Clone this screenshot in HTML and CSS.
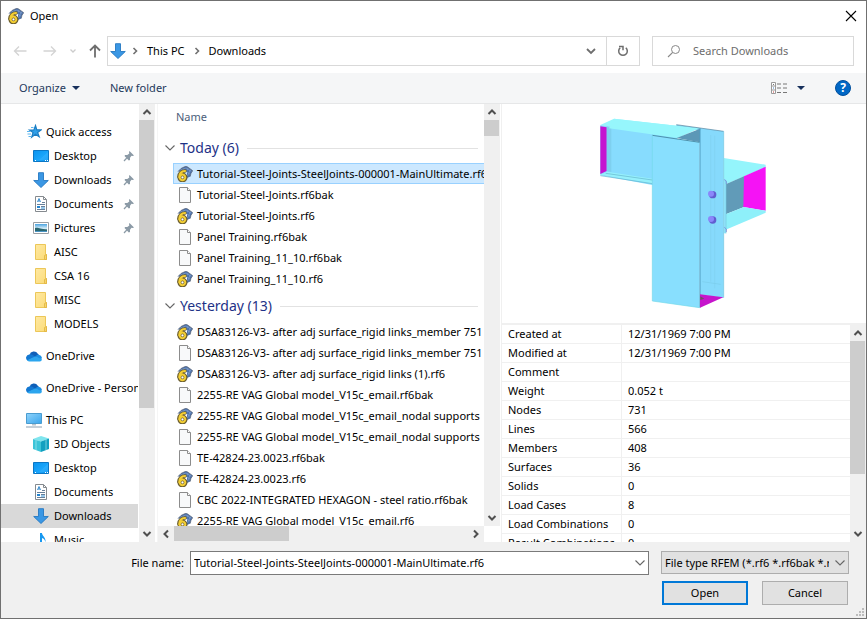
FILE: index.html
```html
<!DOCTYPE html>
<html lang="en">
<head>
<meta charset="utf-8">
<title>Open</title>
<link rel="stylesheet" href="styles.css">
</head>
<body>
<svg class="defs" aria-hidden="true">
  <defs>
    <linearGradient id="g-screen" x1="0" y1="0" x2="1" y2="1"><stop offset="0" stop-color="#0a93ef"/><stop offset=".6" stop-color="#1aa6fb"/><stop offset="1" stop-color="#0b90ea"/></linearGradient>
    <linearGradient id="g-folder" x1="0" y1="0" x2="1" y2="1"><stop offset="0" stop-color="#ffe9a2"/><stop offset="1" stop-color="#fbdb78"/></linearGradient>
    <linearGradient id="g-pc" x1="0" y1="0" x2="1" y2="1"><stop offset="0" stop-color="#8fd3fb"/><stop offset="1" stop-color="#3aa5ec"/></linearGradient>
    <linearGradient id="g-pic" x1="0" y1="0" x2="0" y2="1"><stop offset="0" stop-color="#4aa3e0"/><stop offset=".55" stop-color="#d8eef8"/><stop offset="1" stop-color="#2f6f8f"/></linearGradient>
  </defs>
  <symbol id="rfem" viewBox="0 0 16 16">
    <path d="M1 5.500L4 2.500 7.500.8 9.500.3 12 2l3.700 2.700-1.700 2.500-.8 3.300-3.200 1.500V6z" fill="#4a70ab"/>
    <path d="M3 4l6-2 5.500 3.500M6 3.200L10 6l3.500 2.500M8.500 6.500L11.500 1.500M10.500 10l3-6.500" stroke="#8fabd2" stroke-width=".6" fill="none"/>
    <path d="M1 5.500L4 2.500 7.500.8 9.500.3 12 2l3.700 2.700-1.700 2.500-.8 3.300" stroke="#566070" stroke-width=".7" fill="none"/>
    <path d="M8 5C4.500 5 1.800 7.500 1.800 11M5.500 8.200a3.200 3.200 0 1 1-.1 0" fill="none" stroke="#6e6030" stroke-width="3.600" stroke-linecap="round"/>
    <path d="M8 5C4.500 5 2.300 7.500 2.300 11.300M5.500 8.700a2.700 2.700 0 1 1-.1 0" fill="none" stroke="#f4cf33" stroke-width="2.200" stroke-linecap="round"/>
    <circle cx="5.500" cy="11.400" r="1.400" fill="#fff" stroke="#7b6a2c" stroke-width=".8"/>
  </symbol>
  <symbol id="file" viewBox="0 0 16 16">
    <path d="M2.500.5h8l3 3v12h-11z" fill="#f8f9fa" stroke="#8c8c8c"/>
    <path d="M10.500.5v3h3" fill="#fff" stroke="#8c8c8c"/>
  </symbol>
  <symbol id="star" viewBox="0 0 16 16">
    <path d="M9.500 1.500l1.300 4.300 4.400.1-3.600 2.600 1.600 4.300-3.800-2.600-3.700 2.900 1.300-4.500L3.500 6.100l4.400-.2z" fill="#2f9fe8" stroke="#1b7ec4" stroke-width="1.200"/>
    <path d="M1 7.500h3.500M1.500 10h3.500M2.500 12.500h3M5 3.500h2.500" stroke="#5ab5ee" stroke-width="1"/>
  </symbol>
  <symbol id="desktop" viewBox="0 0 16 16">
    <path d="M.5 2.500h15v11H.5z" fill="url(#g-screen)" stroke="#0b76c4"/>
    <path d="M6 12L15 4v8z" fill="#39b4ff" opacity=".5"/>
    <path d="M2 12.500h1M12 12.500h1M14 12.500h1" stroke="#fff"/>
  </symbol>
  <symbol id="download" viewBox="0 0 16 16">
    <path d="M5.500.7h5v7.800h4.800L8 15.500.7 8.500h4.800z" fill="#3a97e4" stroke="#2578c2" stroke-width=".9"/>
  </symbol>
  <symbol id="document" viewBox="0 0 16 16">
    <path d="M2.500.5h8l3 3v12h-11z" fill="#fff" stroke="#858a8f"/>
    <path d="M10.500.5v3h3" fill="none" stroke="#858a8f"/>
    <path d="M4.500 6l1.500-3.500L7.500 6M5 5h2" fill="none" stroke="#2781c8" stroke-width=".9"/>
    <path d="M9 6.500h3M4 8.500h8M8 10.500h4M4 13.500h8" stroke="#67809a"/>
    <path d="M4 10h3v2H4z" fill="#2384cf"/><path d="M8 12h4" stroke="#2f8fd6"/>
  </symbol>
  <symbol id="picture" viewBox="0 0 16 16">
    <path d="M.5 2.500h15v11H.5z" fill="#fff" stroke="#9a9fa4"/>
    <path d="M2 4h12v8H2z" fill="url(#g-pic)"/>
    <path d="M2 8c3-1 5 1 12 1.500V12H2z" fill="#2b6770"/>
    <path d="M2 11h12v1H2z" fill="#4a94c4"/>
  </symbol>
  <symbol id="folder" viewBox="0 0 16 16">
    <path d="M2.500.5h10v10h1v5h-11z" fill="url(#g-folder)" stroke="#ecc758"/>
    <path d="M11.500 15.500v-4l2-1v5z" fill="#f7d56c" stroke="#dfb43f" stroke-width=".8"/>
  </symbol>
  <symbol id="cloud" viewBox="0 0 16 16">
    <path d="M3.500 7a4.500 4.500 0 0 1 8.300-1.200L13 7l-4 4-6-3z" fill="#0f5fb8"/>
    <path d="M3.300 6.500a3.400 3.400 0 0 0-1.600 6.300L9.500 9 6.500 6.700a4 4 0 0 0-3.200-.2z" fill="#1378d2"/>
    <path d="M9 8.500l2.500-1.700A4 4 0 0 1 16 10.300l-2 1.200z" fill="#1c8fe3"/>
    <path d="M1.200 12.200L9 8.500l6.800 2.600a2.200 2.200 0 0 1-2.300 2.400H3.500a3.500 3.500 0 0 1-2.300-1.300z" fill="#2ba5ee"/>
  </symbol>
  <symbol id="pc" viewBox="0 0 16 16">
    <path d="M.5 1.500h15v10H.5z" fill="url(#g-pc)" stroke="#4a9cd0"/>
    <path d="M6 12h4v1.500H6z" fill="#b9c4cd"/><path d="M0 15h16" stroke="#8ba0b2"/>
  </symbol>
  <symbol id="cube" viewBox="0 0 16 16">
    <path d="M0 3l8-3 8 2.500-8 3z" fill="#7fe5ee"/>
    <path d="M0 3l8 2.500V16l-8-3z" fill="#3cc4d8"/>
    <path d="M8 5.500l8-3V13l-8 3z" fill="#12a0c0"/>
    <path d="M3 4v10M13 3.600V14" stroke="#b6f2f5" stroke-width="1" opacity=".6"/>
  </symbol>
  <symbol id="music" viewBox="0 0 16 16">
    <path d="M7 1h2c0 3 4 4 3.500 9-1-3-2-3.500-3.500-4v7c0 2-5 3-5 .5C4 12 6 11.500 7 12z" fill="#1798f0"/>
  </symbol>
  <symbol id="pin" viewBox="0 0 12 12">
    <path d="M6.500 1L11 5.500 9.800 6 8.500 5.800 7 7.800 7 10 5.800 10.500 1.500 6l.6-1L4.300 5 6.300 3.500 6 2z" fill="#8b9aa6"/>
    <path d="M3.800 8L1 11" stroke="#8b9aa6" stroke-width="1.200"/>
  </symbol>
  <symbol id="up" viewBox="0 0 16 16"><path d="M4.500 10L8 6.500 11.500 10" fill="none" stroke="#505050" stroke-width="2"/></symbol>
  <symbol id="down" viewBox="0 0 16 16"><path d="M4.500 6L8 9.500 11.500 6" fill="none" stroke="#505050" stroke-width="2"/></symbol>
  <symbol id="left" viewBox="0 0 16 16"><path d="M10 4.500L6.500 8l3.500 3.500" fill="none" stroke="#505050" stroke-width="2"/></symbol>
  <symbol id="right" viewBox="0 0 16 16"><path d="M6 4.500L9.500 8 6 11.500" fill="none" stroke="#505050" stroke-width="2"/></symbol>
  <symbol id="thin-down" viewBox="0 0 12 12"><path d="M1.500 3.500L6 8l4.500-4.500" fill="none" stroke="#666" stroke-width="1.100"/></symbol>
  <symbol id="crumb" viewBox="0 0 8 8"><path d="M2.500 1L5.500 4l-3 3" fill="none" stroke="#707070" stroke-width="1.600"/></symbol>
  <symbol id="triangle" viewBox="0 0 8 4"><path d="M0 0h8L4 4z" fill="#17305c"/></symbol>
</svg>

<main class="dialog">
  <header class="titlebar">
    <svg class="icon"><use href="#rfem"/></svg>
    <h1>Open</h1>
    <button class="close" aria-label="Close"><svg viewBox="0 0 12 12"><path d="M1 1l10 10M11 1L1 11" stroke="#000" stroke-width="1.100"/></svg></button>
  </header>

  <nav class="navbar" aria-label="Location">
    <button class="back" aria-label="Back"><svg class="arrow faint" viewBox="0 0 14 14"><path d="M13.500 7H2M6 2.500L1.500 7 6 11.500"/></svg></button>
    <button class="forward" aria-label="Forward"><svg class="arrow faint" viewBox="0 0 14 14"><path d="M.5 7H12M8 2.500L12.500 7 8 11.500"/></svg></button>
    <button class="recent" aria-label="Recent locations"><svg viewBox="0 0 8 8"><path d="M1.500 2.500L4 5l2.500-2.500" fill="none" stroke="#ccc" stroke-width="1.300"/></svg></button>
    <button class="parent" aria-label="Up"><svg class="arrow" viewBox="0 0 14 14"><path d="M7 13.500V2M2 6.500L7 1.500l5 5"/></svg></button>
    <div class="address">
      <svg class="icon"><use href="#download"/></svg>
      <svg class="sep"><use href="#crumb"/></svg>
      <a href="#pc">This PC</a>
      <svg class="sep"><use href="#crumb"/></svg>
      <a href="#downloads">Downloads</a>
      <button class="history" aria-label="Previous locations"><svg viewBox="0 0 10 10"><path d="M1 3l4 4 4-4" fill="none" stroke="#6e6e6e" stroke-width="1.800"/></svg></button>
      <button class="refresh" aria-label="Refresh"><svg viewBox="0 0 12 12"><path d="M3.200 2.800A4.300 4.300 0 1 0 8.800 2.800" fill="none" stroke="#6e6e6e" stroke-width="1.500"/><path d="M2 1.500h4v3.800" fill="none" stroke="#6e6e6e" stroke-width="1.500"/></svg></button>
    </div>
    <label class="search">
      <svg viewBox="0 0 14 14"><circle cx="8.500" cy="5.500" r="4" fill="none" stroke="#888"/><path d="M5.700 8.300L1 13" stroke="#888" stroke-width="1.100"/></svg>
      <input type="text" placeholder="Search Downloads" aria-label="Search Downloads">
    </label>
  </nav>

  <div class="toolbar">
    <button>Organize <svg class="tri"><use href="#triangle"/></svg></button>
    <button>New folder</button>
    <button class="view" aria-label="View">
      <svg class="view-icon" viewBox="0 0 16 12"><path d="M.5.5h4v11h-4zM.5 4h4M.5 8h4" fill="#fff" stroke="#9a9a9a"/><path d="M2 2h1v1H2z" fill="#777"/><path d="M2 5.500h1v1H2z" fill="#3978c0"/><path d="M2 9.500h1v1H2z" fill="#c43e3e"/><path d="M6 2h4M12 2h4M6 6h4M12 6h4M6 10.500h4M12 10.500h4" stroke="#777"/></svg>
      <svg class="tri"><use href="#triangle"/></svg>
    </button>
    <button class="help" aria-label="Help">?</button>
  </div>

  <div class="content">
    <aside class="sidebar">
      <ul class="tree">
        <li><a href="#quick"><svg class="icon"><use href="#star"/></svg>Quick access</a></li>
        <li class="child"><a href="#d"><svg class="icon"><use href="#desktop"/></svg>Desktop<svg class="pin"><use href="#pin"/></svg></a></li>
        <li class="child"><a href="#d"><svg class="icon"><use href="#download"/></svg>Downloads<svg class="pin"><use href="#pin"/></svg></a></li>
        <li class="child"><a href="#d"><svg class="icon"><use href="#document"/></svg>Documents<svg class="pin"><use href="#pin"/></svg></a></li>
        <li class="child"><a href="#d"><svg class="icon"><use href="#picture"/></svg>Pictures<svg class="pin"><use href="#pin"/></svg></a></li>
        <li class="child"><a href="#d"><svg class="icon"><use href="#folder"/></svg>AISC</a></li>
        <li class="child"><a href="#d"><svg class="icon"><use href="#folder"/></svg>CSA 16</a></li>
        <li class="child"><a href="#d"><svg class="icon"><use href="#folder"/></svg>MISC</a></li>
        <li class="child"><a href="#d"><svg class="icon"><use href="#folder"/></svg>MODELS</a></li>
        <li class="root"><a href="#d"><svg class="icon"><use href="#cloud"/></svg>OneDrive</a></li>
        <li class="root"><a href="#d"><svg class="icon"><use href="#cloud"/></svg>OneDrive - Personal</a></li>
        <li class="root"><a href="#d"><svg class="icon"><use href="#pc"/></svg>This PC</a></li>
        <li class="child"><a href="#d"><svg class="icon"><use href="#cube"/></svg>3D Objects</a></li>
        <li class="child"><a href="#d"><svg class="icon"><use href="#desktop"/></svg>Desktop</a></li>
        <li class="child"><a href="#d"><svg class="icon"><use href="#document"/></svg>Documents</a></li>
        <li class="child current"><a href="#d"><svg class="icon"><use href="#download"/></svg>Downloads</a></li>
        <li class="child"><a href="#d"><svg class="icon"><use href="#music"/></svg>Music</a></li>
      </ul>
      <div class="vscroll"><svg><use href="#up"/></svg><div class="track"><div class="thumb tree-thumb"></div></div><svg><use href="#down"/></svg></div>
    </aside>

    <section class="files" aria-label="Files">
      <div class="list">
        <div class="column-name">Name</div>
        <h2><svg><use href="#thin-down"/></svg>Today (6)</h2>
        <ul>
          <li class="selected"><a href="#f"><svg class="icon"><use href="#rfem"/></svg>Tutorial-Steel-Joints-SteelJoints-000001-MainUltimate.rf6</a></li>
          <li><a href="#f"><svg class="icon"><use href="#file"/></svg>Tutorial-Steel-Joints.rf6bak</a></li>
          <li><a href="#f"><svg class="icon"><use href="#rfem"/></svg>Tutorial-Steel-Joints.rf6</a></li>
          <li><a href="#f"><svg class="icon"><use href="#file"/></svg>Panel Training.rf6bak</a></li>
          <li><a href="#f"><svg class="icon"><use href="#file"/></svg>Panel Training_11_10.rf6bak</a></li>
          <li><a href="#f"><svg class="icon"><use href="#rfem"/></svg>Panel Training_11_10.rf6</a></li>
        </ul>
        <h2><svg><use href="#thin-down"/></svg>Yesterday (13)</h2>
        <ul>
          <li><a href="#f"><svg class="icon"><use href="#rfem"/></svg>DSA83126-V3- after adj surface_rigid links_member 751</a></li>
          <li><a href="#f"><svg class="icon"><use href="#file"/></svg>DSA83126-V3- after adj surface_rigid links_member 751</a></li>
          <li><a href="#f"><svg class="icon"><use href="#rfem"/></svg>DSA83126-V3- after adj surface_rigid links (1).rf6</a></li>
          <li><a href="#f"><svg class="icon"><use href="#file"/></svg>2255-RE VAG Global model_V15c_email.rf6bak</a></li>
          <li><a href="#f"><svg class="icon"><use href="#rfem"/></svg>2255-RE VAG Global model_V15c_email_nodal supports</a></li>
          <li><a href="#f"><svg class="icon"><use href="#file"/></svg>2255-RE VAG Global model_V15c_email_nodal supports</a></li>
          <li><a href="#f"><svg class="icon"><use href="#file"/></svg>TE-42824-23.0023.rf6bak</a></li>
          <li><a href="#f"><svg class="icon"><use href="#rfem"/></svg>TE-42824-23.0023.rf6</a></li>
          <li><a href="#f"><svg class="icon"><use href="#file"/></svg>CBC 2022-INTEGRATED HEXAGON - steel ratio.rf6bak</a></li>
          <li><a href="#f"><svg class="icon"><use href="#rfem"/></svg>2255-RE VAG Global model_V15c_email.rf6</a></li>
        </ul>
      </div>
      <div class="vscroll"><svg><use href="#up"/></svg><div class="track"><div class="thumb list-thumb"></div></div><svg><use href="#down"/></svg></div>
      <div class="hscroll"><svg><use href="#left"/></svg><div class="track"><div class="thumb"></div></div><svg><use href="#right"/></svg></div>
    </section>

    <section class="preview" aria-label="Preview">
      <svg class="model" viewBox="0 0 570 645" role="img" aria-label="Steel joint model">
        <path d="M34 60L75 41 330 70 265 99z" fill="#96f6fc"/>
        <path d="M34 60L265 92V240H190L34 211z" fill="#87dcfe"/>
        <path d="M34 64L53 67V198L34 207z" fill="#c414d0"/>
        <path d="M53 67h14v134l-14-3z" fill="#78c8e6" opacity=".6"/>
        <path d="M34 209L54 200 190 221V236z" fill="#96f0fb"/>
        <path d="M34 212L190 236M50 205l140 20" stroke="#64b4cc" stroke-width="2" fill="none"/>
        <path d="M262 59L404 79V578L333 569V70z" fill="#86dafc"/>
        <path d="M262 59l73 11v6l-73-9z" fill="#79cbe9"/>
        <path d="M75 41L330 70 265 99 60 70z" fill="#96f6fc"/>
        <path d="M263 99L333 71V112z" fill="#5c98b7"/>
        <path d="M190 91L332 112V608L190 588z" fill="#88dffe"/>
        <path d="M190 91L332 112" stroke="#4c91ac" stroke-width="3"/>
        <path d="M262 59L404 79" stroke="#56819a" stroke-width="2"/>
        <path d="M333 70V608" stroke="#4f9cc0" stroke-width="3"/>
        <path d="M190 91V588L332 608" stroke="#72d9ea" stroke-width="2" fill="none"/>
        <path d="M365 90V530M377 92V550" stroke="#80d1ef" stroke-width="3" opacity=".6"/>
        <path d="M340 530l55 8" stroke="#7accea" stroke-width="2"/>
        <path d="M404 159L530 179V187L410 238 404 230z" fill="#94f5fc"/>
        <path d="M410 238L465 214V306L410 328z" fill="#619bb8"/>
        <path d="M465 214L530 185V317L463 306z" fill="#f513f5"/>
        <path d="M410 328L465 306 530 317V323L410 374z" fill="#8ef0fa"/>
        <path d="M404 222h7v163h-7z" fill="#91e5fb"/>
        <path d="M404 79V578M411 226V385" stroke="#74c6de" stroke-width="2"/>
        <path d="M406 224l6 5v8M406 367l6 5v9" stroke="#6e75d2" stroke-width="2" fill="none"/>
        <g fill="#625dd0"><circle cx="371" cy="269" r="11"/><circle cx="371" cy="345" r="11"/></g>
        <g fill="#8b87fa"><circle cx="366" cy="266" r="9"/><circle cx="366" cy="342" r="9"/></g>
        <path d="M333 568L403 577 333 608z" fill="#c614cc"/>
        <path d="M334 574l12 7-12 4z" fill="#6b5360"/>
      </svg>
      <div class="details">
        <div class="table-clip">
          <table>
            <tbody>
              <tr><th scope="row">Created at</th><td>12/31/1969 7:00 PM</td></tr>
              <tr><th scope="row">Modified at</th><td>12/31/1969 7:00 PM</td></tr>
              <tr><th scope="row">Comment</th><td></td></tr>
              <tr><th scope="row">Weight</th><td>0.052 t</td></tr>
              <tr><th scope="row">Nodes</th><td>731</td></tr>
              <tr><th scope="row">Lines</th><td>566</td></tr>
              <tr><th scope="row">Members</th><td>408</td></tr>
              <tr><th scope="row">Surfaces</th><td>36</td></tr>
              <tr><th scope="row">Solids</th><td>0</td></tr>
              <tr><th scope="row">Load Cases</th><td>8</td></tr>
              <tr><th scope="row">Load Combinations</th><td>0</td></tr>
              <tr><th scope="row">Result Combinations</th><td>0</td></tr>
            </tbody>
          </table>
        </div>
        <div class="vscroll"><svg><use href="#up"/></svg><div class="track"><div class="thumb details-thumb"></div></div><svg><use href="#down"/></svg></div>
      </div>
    </section>
  </div>

  <footer class="footer">
    <label class="name-label" for="filename">File name:</label>
    <div class="combo">
      <input id="filename" type="text" value="Tutorial-Steel-Joints-SteelJoints-000001-MainUltimate.rf6">
      <button aria-label="Show file names"><svg><use href="#thin-down"/></svg></button>
    </div>
    <div class="type">
      <select aria-label="File type"><option>File type RFEM (*.rf6 *.rf6bak *.rfbak)</option></select>
      <svg><use href="#thin-down"/></svg>
    </div>
    <div class="actions">
      <button class="primary">Open</button>
      <button>Cancel</button>
    </div>
    <svg class="grip" viewBox="0 0 9 9"><path d="M6 0h2v2H6zM3 3h2v2H3zM6 3h2v2H6zM0 6h2v2H0zM3 6h2v2H3zM6 6h2v2H6z" fill="#bcbcbc"/></svg>
  </footer>
</main>
</body>
</html>
```
FILE: styles.css
```css
* { box-sizing: border-box; }

body {
  margin: 0;
  font-family: "Noto Sans", "Open Sans", sans-serif;
  font-size: 11px;
  line-height: 16px;
  color: #000;
}

button, input, select { font: inherit; color: inherit; }
button { padding: 0; border: 0; background: none; }
a { color: inherit; text-decoration: none; }
ul { margin: 0; padding: 0; list-style: none; }
h1, h2 { margin: 0; font-size: inherit; font-weight: normal; }
svg { display: block; flex: none; }

.defs { position: absolute; width: 0; height: 0; }
.icon { width: 16px; height: 16px; }

.dialog {
  display: flex;
  flex-direction: column;
  height: 100vh;
  border: 1px solid #707070;
  background: #fff;
}

/* Title bar */
.titlebar {
  display: flex;
  align-items: center;
  gap: 6px;
  height: 29px;
  padding: 0 9px 0 7px;
}
.close { margin-left: auto; }
.close svg { width: 12px; height: 12px; }

/* Navigation bar */
.navbar {
  display: flex;
  align-items: center;
  height: 43px;
  padding: 0 12px 1px;
}
.back { width: 30px; }
.forward { width: 26px; }
.recent { width: 19px; }
.parent { width: 14px; margin-right: 5px; }
.recent svg { width: 8px; height: 8px; }
.arrow {
  width: 14px;
  height: 14px;
  fill: none;
  stroke: #6e6e6e;
  stroke-width: 1.8;
}
.faint { stroke: #d4d4d4; stroke-width: 1.4; }
.address, .search {
  display: flex;
  align-items: center;
  height: 30px;
  border: 1px solid #d9d9d9;
}
.address { flex: 1; padding-left: 2px; }
.address a { padding: 0 8px; }
.sep { width: 8px; height: 8px; margin-left: 5px; }
.address a + .sep { margin-left: 0; }
.history { margin-left: auto; padding: 0 10px; }
.history svg { width: 10px; height: 10px; }
.refresh { height: 28px; padding: 0 10px; border-left: 1px solid #d9d9d9; }
.refresh svg { width: 12px; height: 12px; }
.search {
  flex: 0 0 202px;
  gap: 12px;
  margin-left: 12px;
  padding-left: 14px;
}
.search svg { width: 14px; height: 14px; }
.search input {
  flex: 1;
  min-width: 0;
  padding: 0;
  border: 0;
  outline: 0;
  background: none;
}
.search input::placeholder { color: #6d6d6d; opacity: 1; }

/* Command bar */
.toolbar {
  display: flex;
  align-items: center;
  height: 31px;
  padding: 0 15px 0 18px;
  border-bottom: 1px solid #e6e7e8;
  background: #f5f6f7;
  color: #1e395b;
}
.toolbar button { display: flex; align-items: center; margin-right: 30px; }
.tri { width: 8px; height: 4px; margin-left: 6px; }
.toolbar .view { gap: 4px; margin: 0 30px 0 auto; }
.view-icon { width: 16px; height: 12px; }
.toolbar .help {
  justify-content: center;
  width: 16px;
  height: 16px;
  margin: 0;
  border: 1px solid #004f9e;
  border-radius: 50%;
  background: #0067c5;
  color: #fff;
  font-size: 12px;
  font-weight: bold;
}

/* Panes */
.content { display: flex; flex: 1; min-height: 0; }

.vscroll, .hscroll { display: flex; background: #f0f0f0; }
.vscroll { flex: none; flex-direction: column; width: 16px; }
.vscroll svg, .hscroll svg { width: 16px; height: 16px; }
.track { flex: 1; min-height: 0; }
.thumb { background: #cdcdcd; }
.vscroll .thumb { width: 15px; }
.tree-thumb { height: 71%; }
.list-thumb { height: 4%; }
.details-thumb { height: 72%; }

.sidebar {
  display: flex;
  gap: 1px;
  flex: 0 0 157px;
  min-width: 0;
  padding-right: 2px;
  border-right: 1px solid #f5f5f5;
}
.tree { flex: 1; min-width: 0; overflow: hidden; padding-top: 16px; }
.tree a {
  display: flex;
  align-items: center;
  gap: 4px;
  height: 24px;
  padding-left: 25px;
  white-space: nowrap;
}
.tree .child a { gap: 5px; padding-left: 32px; }
.tree .root { padding-top: 8px; }
.tree .current { background: #d9d9d9; }
.pin { width: 12px; height: 12px; margin: 0 3px 0 auto; }

.files {
  display: grid;
  grid-template: minmax(0, 1fr) 16px / minmax(0, 1fr) 16px;
  flex: 0 0 344px;
  padding-right: 1px;
  border-right: 1px solid #f0f0f0;
}
.list { overflow: hidden; }
.column-name { padding: 5px 0 6px 18px; color: #4c607a; }
.list h2 {
  display: flex;
  align-items: center;
  gap: 4px;
  height: 32px;
  padding: 2px 6px 0 6px;
  color: #1e3287;
  font-size: 14px;
}
.list h2 svg { width: 12px; height: 12px; }
.list h2::after {
  content: "";
  flex: 1;
  height: 1px;
  margin-left: 4px;
  background: #e2e2e2;
}
.list li { height: 21px; margin-left: 15px; border: 1px solid transparent; border-right: 0; }
.list .selected { border-color: #99d1ff; background: #cce8ff; }
.list a {
  display: flex;
  align-items: center;
  gap: 4px;
  height: 20px;
  padding-left: 3px;
  white-space: nowrap;
}
.hscroll .thumb { width: 39%; height: 15px; }

.preview { display: flex; flex: 1; flex-direction: column; min-width: 0; }
.model { width: 190px; height: 215px; margin: 1px auto 3px; }
.details {
  display: flex;
  flex: 1;
  min-height: 0;
  border-top: 2px solid #f0f0f0;
}
.table-clip { flex: 1; min-width: 0; overflow: hidden; }
table { width: 100%; border-spacing: 0; }
th, td {
  height: 19px;
  padding: 1px 0 1px 6px;
  border-bottom: 1px solid #f0f0f0;
  font-weight: normal;
  text-align: left;
  white-space: nowrap;
}
th { width: 120px; border-right: 1px solid #f0f0f0; }

/* Footer */
.footer {
  position: relative;
  display: grid;
  grid-template-columns: 183px minmax(0, 1fr) 188px;
  grid-template-rows: 24px 24px;
  row-gap: 6px;
  height: 76px;
  padding: 9px 17px 0 0;
  background: #f0f0f0;
}
.name-label { align-self: center; text-align: right; }
.combo {
  display: flex;
  align-items: center;
  margin: 0 12px 0 6px;
  border: 1px solid #7a7a7a;
  background: #fff;
}
.combo input {
  flex: 1;
  min-width: 0;
  padding: 0 3px;
  border: 0;
  outline: 0;
  background: none;
}
.combo svg { width: 12px; height: 12px; margin-right: 2px; }
.type { display: flex; align-items: center; height: 23px; }
.type select {
  width: 100%;
  height: 23px;
  padding: 0 19px 0 3px;
  border: 1px solid #adadad;
  border-radius: 0;
  background: #e1e1e1;
  appearance: none;
}
.type svg { width: 12px; height: 12px; margin-left: -15px; pointer-events: none; }
.actions {
  display: grid;
  grid-column: 3;
  grid-template-columns: 1fr 1fr;
  gap: 14px;
  padding: 0 1px;
}
.actions button { border: 1px solid #adadad; background: #e1e1e1; }
.actions .primary { border: 2px solid #0078d7; }
.grip { position: absolute; right: 1px; bottom: 1px; width: 9px; height: 9px; }
```
